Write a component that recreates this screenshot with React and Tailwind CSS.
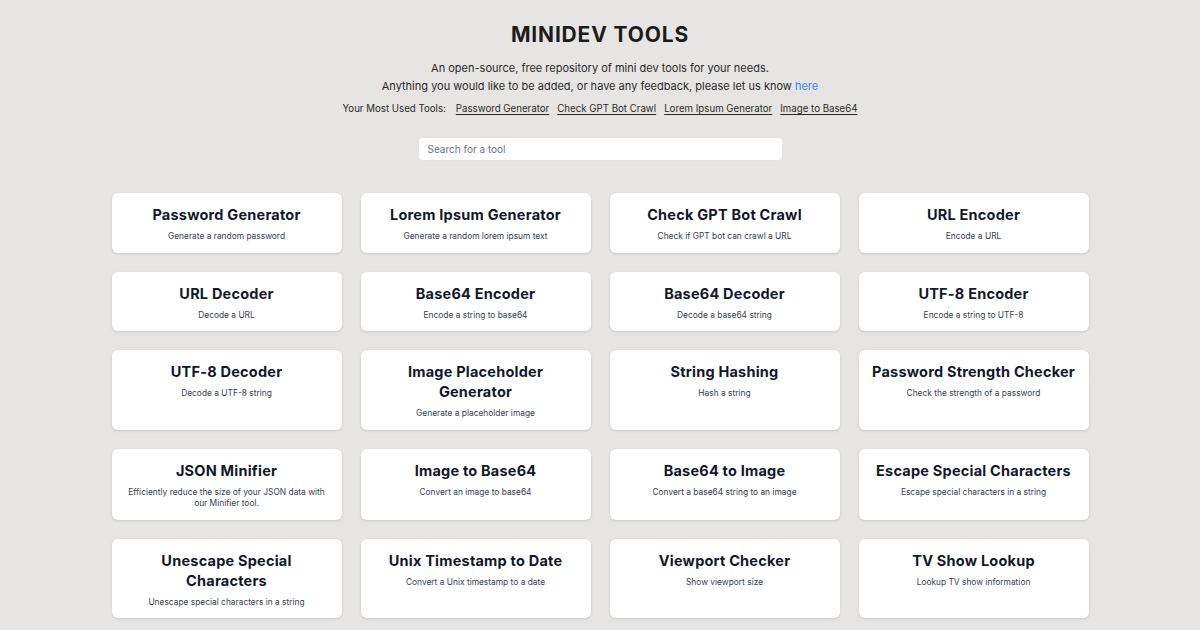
const tools = [
  { name: "Password Generator", desc: "Generate a random password" },
  { name: "Lorem Ipsum Generator", desc: "Generate a random lorem ipsum text" },
  { name: "Check GPT Bot Crawl", desc: "Check if GPT bot can crawl a URL" },
  { name: "URL Encoder", desc: "Encode a URL" },
  { name: "URL Decoder", desc: "Decode a URL" },
  { name: "Base64 Encoder", desc: "Encode a string to base64" },
  { name: "Base64 Decoder", desc: "Decode a base64 string" },
  { name: "UTF-8 Encoder", desc: "Encode a string to UTF-8" },
  { name: "UTF-8 Decoder", desc: "Decode a UTF-8 string" },
  { name: "Image Placeholder Generator", desc: "Generate a placeholder image" },
  { name: "String Hashing", desc: "Hash a string" },
  { name: "Password Strength Checker", desc: "Check the strength of a password" },
  { name: "JSON Minifier", desc: "Efficiently reduce the size of your JSON data with our Minifier tool." },
  { name: "Image to Base64", desc: "Convert an image to base64" },
  { name: "Base64 to Image", desc: "Convert a base64 string to an image" },
  { name: "Escape Special Characters", desc: "Escape special characters in a string" },
  { name: "Unescape Special Characters", desc: "Unescape special characters in a string" },
  { name: "Unix Timestamp to Date", desc: "Convert a Unix timestamp to a date" },
  { name: "Viewport Checker", desc: "Show viewport size" },
  { name: "TV Show Lookup", desc: "Lookup TV show information" },
];

const favourites = ["Password Generator", "Check GPT Bot Crawl", "Lorem Ipsum Generator", "Image to Base64"];

function ToolCard({ name, desc }) {
  return (
    <a href="#" className="block bg-white rounded-md shadow-[0_1px_3px_rgba(0,0,0,0.12)] px-[11px] pt-3 pb-2.5 text-center hover:shadow-md transition-shadow">
      <h2 className="text-[14.5px] leading-5 font-bold tracking-[0.015em] text-[#111827]">{name}</h2>
      <p className="mt-1.5 text-[8.4px] leading-[11.5px] text-[#374151]">{desc}</p>
    </a>
  );
}

export default function App() {
  return (
    <div className="min-h-screen bg-[#e6e5e3] font-['Inter',sans-serif] text-[#1f1f1f]">
      {/* Header */}
      <header className="pt-[21px] text-center">
        <h1 className="text-[21px] leading-7 font-bold tracking-[0.04em] text-[#1c1c1c]">MINIDEV TOOLS</h1>
        <div className="mt-[10px] text-[11px] leading-[18px] text-[#2a2a2a]">
          <p>An open-source, free repository of mini dev tools for your needs.</p>
          <p>
            Anything you would like to be added, or have any feedback, please let us know{" "}
            <a href="#" className="text-[#3b82f6]">here</a>
          </p>
        </div>
        <div className="mt-[6px] flex justify-center items-center gap-[8px] text-[9.7px] leading-4 text-[#2a2a2a]">
          <span className="mr-[2px]">Your Most Used Tools:</span>
          {favourites.map((f) => (
            <a key={f} href="#" className="underline underline-offset-2">{f}</a>
          ))}
        </div>
        <div className="mt-[20px] flex justify-center">
          <input
            type="text"
            placeholder="Search for a tool"
            className="w-[365px] h-6 rounded-[4px] bg-white border border-[#e2e2e2] px-[9px] text-[10px] text-[#1f2937] placeholder:text-[#64748b] outline-none"
          />
        </div>
      </header>

      {/* Tools grid */}
      <main className="mt-8 pb-10">
        <div className="max-w-[977px] mx-auto grid grid-cols-4 gap-[19px]">
          {tools.map((t) => (
            <ToolCard key={t.name} {...t} />
          ))}
        </div>
      </main>
    </div>
  );
}
